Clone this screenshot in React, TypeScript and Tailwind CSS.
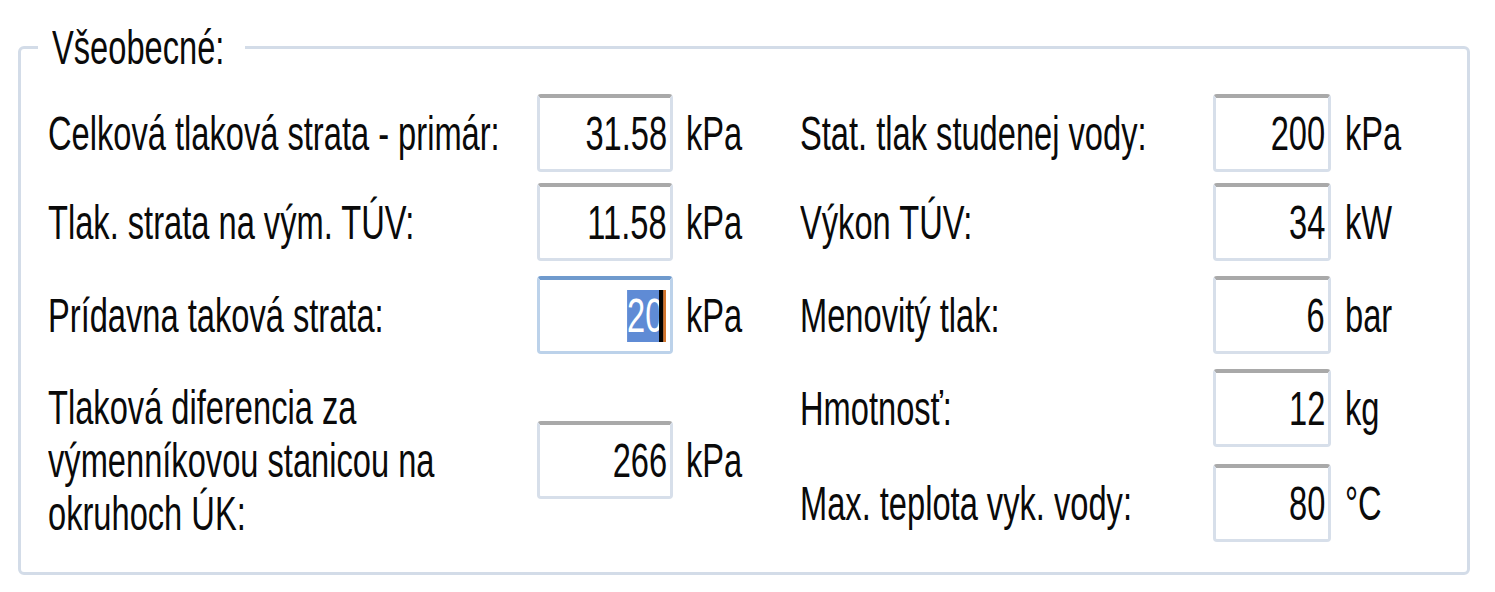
import React from 'react';

const txt = "inline-block origin-left scale-x-[0.68] whitespace-nowrap";
const num = "inline-block origin-right scale-x-[0.68] whitespace-nowrap";

function Field({ value, wide }: { value: string; wide: boolean }) {
  return (
    <div
      className={
        wide
          ? "flex h-[78px] w-[136px] items-center justify-end rounded-[4px] border-[3px] border-t-[4px] border-[#d7dfea] border-t-[#a9a9a9] bg-white pr-[3px]"
          : "flex h-[78px] w-[118px] items-center justify-end rounded-[4px] border-[3px] border-t-[4px] border-[#d7dfea] border-t-[#a9a9a9] bg-white pr-[3px]"
      }
    >
      <span className={num}>{value}</span>
    </div>
  );
}

function FocusedField() {
  return (
    <div className="flex h-[78px] w-[136px] items-center justify-end rounded-[4px] border-[3px] border-t-[4px] border-[#bcd2ea] border-t-[#6f9acd] bg-white pr-[4px]">
      <span className="relative inline-block h-[52px] origin-right scale-x-[0.68] bg-[#5f8bd5] leading-[52px] text-white whitespace-nowrap">
        20
        <span className="absolute right-0 top-0 h-[52px] w-[6px] bg-black" />
      </span>
      <span className="h-[52px] w-[3px] bg-[#d2742c]" />
    </div>
  );
}

function LeftRow({ label, value, unit, mt }: { label: string; value: string; unit: string; mt: string }) {
  return (
    <div className={`flex h-[78px] items-center ${mt}`}>
      <div className="w-[489px]"><span className={txt}>{label}</span></div>
      <Field value={value} wide={true} />
      <div className="pl-[13px]"><span className={txt}>{unit}</span></div>
    </div>
  );
}

function RightRow({ label, value, unit, mt }: { label: string; value: string; unit: string; mt: string }) {
  return (
    <div className={`flex h-[78px] items-center ${mt}`}>
      <div className="w-[413px]"><span className={txt}>{label}</span></div>
      <Field value={value} wide={false} />
      <div className="pl-[14px]"><span className={txt}>{unit}</span></div>
    </div>
  );
}

export default function App() {
  return (
    <div className="h-[592px] w-[1495px] overflow-hidden bg-white pl-[18px] pt-[21px] font-['Liberation_Sans',Arial,sans-serif] text-[48px] leading-[53px] text-[#0a0a0a]">
      <fieldset className="h-[554px] w-[1452px] rounded-[6px] border-[3px] border-[#d3dce8] pl-[27px] pt-[20px]">
        <legend className="-ml-[10px] w-[207px] pl-[14px] leading-[53px]">
          <span className={txt}>Všeobecné:</span>
        </legend>
        <div className="flex">
          <div className="w-[752px]">
            <LeftRow label="Celková tlaková strata - primár:" value="31.58" unit="kPa" mt="mt-0" />
            <LeftRow label="Tlak. strata na vým. TÚV:" value="11.58" unit="kPa" mt="mt-[11px]" />
            <div className="mt-[15px] flex h-[78px] items-center">
              <div className="w-[489px]"><span className={txt}>Prídavna taková strata:</span></div>
              <FocusedField />
              <div className="pl-[13px]"><span className={txt}>kPa</span></div>
            </div>
            <div className="mt-[18px] flex h-[176px] items-center">
              <div className="w-[489px]">
                <span className={txt}>
                  Tlaková diferencia za
                  <br />
                  výmenníkovou stanicou na
                  <br />
                  okruhoch ÚK:
                </span>
              </div>
              <Field value="266" wide={true} />
              <div className="pl-[13px]"><span className={txt}>kPa</span></div>
            </div>
          </div>
          <div>
            <RightRow label="Stat. tlak studenej vody:" value="200" unit="kPa" mt="mt-0" />
            <RightRow label="Výkon TÚV:" value="34" unit="kW" mt="mt-[11px]" />
            <RightRow label="Menovitý tlak:" value="6" unit="bar" mt="mt-[15px]" />
            <RightRow label="Hmotnosť:" value="12" unit="kg" mt="mt-[15px]" />
            <RightRow label="Max. teplota vyk. vody:" value="80" unit="°C" mt="mt-[17px]" />
          </div>
        </div>
      </fieldset>
    </div>
  );
}
